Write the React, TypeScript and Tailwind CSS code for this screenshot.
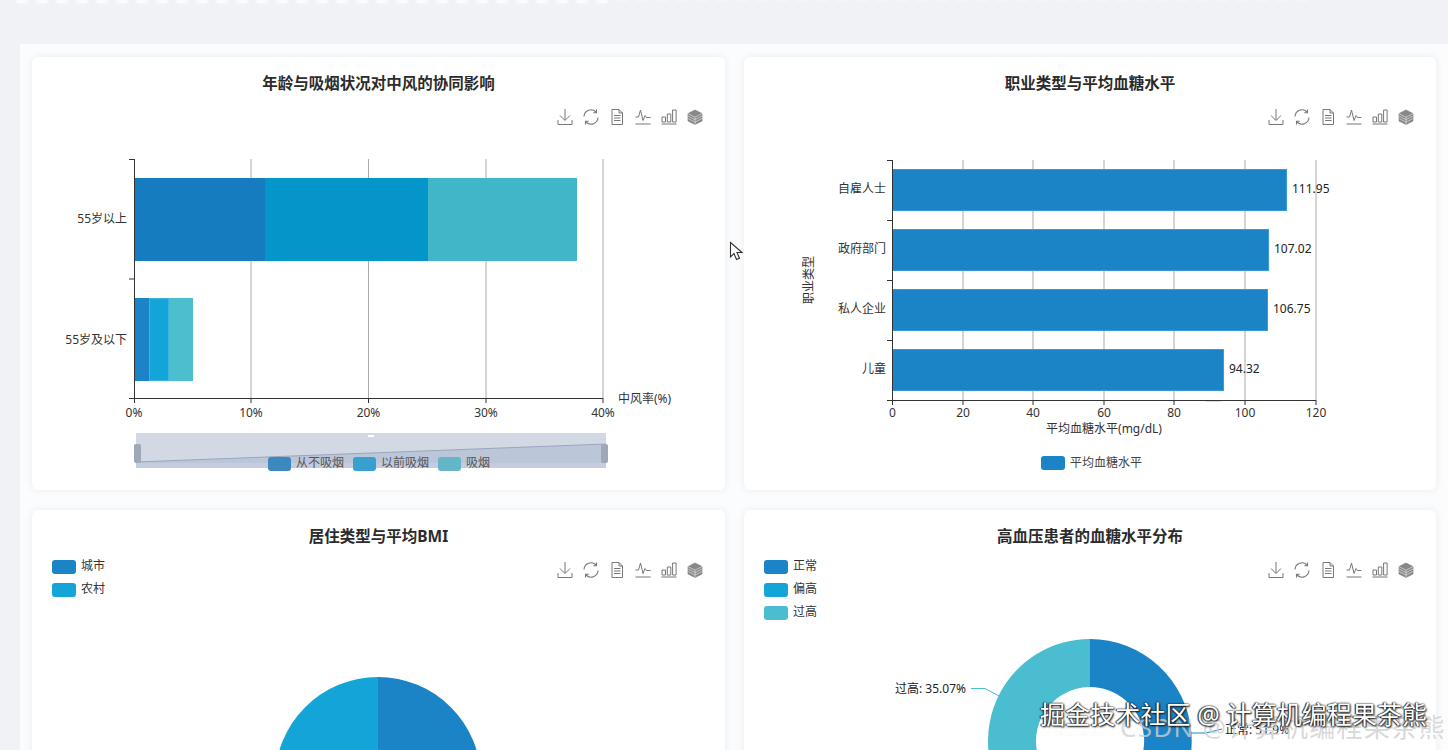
import React from "react";

const Toolbar = () => (
  <div className="flex gap-[10px] mt-[2px] mr-[22px] text-[#777]">
    <svg width="16" height="18" viewBox="0 0 16 18" fill="none" stroke="currentColor" strokeWidth="1">
      <path d="M8 1v11M3 7.5l5 5 5-5M1 12v4.5h14V12" />
    </svg>
    <svg width="16" height="18" viewBox="0 0 16 18" fill="none" stroke="currentColor" strokeWidth="1.1">
      <path d="M1 8.5A7 7 0 0 1 13 4M15 9.5A7 7 0 0 1 3 14" />
      <path d="M13.5 1.5V4.7H10.3M2.5 16.5V13.3H5.7" />
    </svg>
    <svg width="16" height="18" viewBox="0 0 16 18" fill="none" stroke="currentColor" strokeWidth="1">
      <path d="M3 1.5h7l3.5 3.5v11.5H3zM10 1.5V5h3.5M5 7.5h6.5M5 10h6.5M5 12.5h6.5" />
    </svg>
    <svg width="16" height="18" viewBox="0 0 16 18" fill="none" stroke="currentColor" strokeWidth="1">
      <path d="M0.5 9h3l2-7 2.5 10.5 2-5 1.5 2h4M0.5 16h15" />
    </svg>
    <svg width="16" height="18" viewBox="0 0 16 18" fill="none" stroke="currentColor" strokeWidth="1">
      <path d="M1 9h3.5v5H1zM6.3 6h3.5v8H6.3zM11.6 2h3.5v12h-3.5zM0.5 16h15" />
    </svg>
    <svg width="16" height="18" viewBox="0 0 16 18" fill="#888" stroke="#777" strokeWidth="0.6">
      <path d="M8 2l7 3.6v7.4L8 16.5 1 13V5.6z" />
      <path d="M1 5.6L8 9.2l7-3.6M8 9.2v7.3M1 8l7 3.6L15 8M1 10.5l7 3.6 7-3.6" stroke="#eee" fill="none" />
    </svg>
  </div>
);

const Legend = ({ items }: { items: [string, string][] }) => (
  <div className="flex flex-col gap-[9px] mt-[1px] ml-[20px]">
    {items.map(([c, t]) => (
      <div key={t} className="flex items-center gap-[5px] h-[14px]">
        <span className="w-[24px] h-[14px] rounded-[3px]" style={{ backgroundColor: c }} />
        <span className="text-[12px] leading-[14px] text-[#333] -translate-y-[1px]">{t}</span>
      </div>
    ))}
  </div>
);

const Card = ({
  title,
  legend,
  children,
}: {
  title: string;
  legend?: [string, string][];
  children: React.ReactNode;
}) => (
  <div className="h-[433px] bg-white rounded-[6px] shadow-[0_0_8px_rgba(0,0,0,0.07)]">
    <h2 className="h-[49px] pt-[15px] text-center text-[15.5px] leading-[22px] font-bold text-[#2b2b2b]">{title}</h2>
    <div className="h-[34px] flex justify-between items-start">
      {legend ? <Legend items={legend} /> : <div />}
      <Toolbar />
    </div>
    {children}
  </div>
);

const T = ({
  x,
  y,
  a = "middle",
  c = "fill-[#333]",
  children,
}: {
  x: number;
  y: number;
  a?: "start" | "middle" | "end";
  c?: string;
  children: React.ReactNode;
}) => (
  <text x={x} y={y} textAnchor={a} dominantBaseline="central" className={`text-[12px] ${c}`}>
    {children}
  </text>
);

const Chart1 = () => (
  <svg width="693" height="350" viewBox="32 140 693 350" className="block">
    {[251, 368.5, 486, 603].map((x) => (
      <line key={x} x1={x} x2={x} y1="159" y2="398" stroke="#aaa" />
    ))}
    <rect x="134" y="178" width="131" height="83" fill="#157cbf" />
    <rect x="265" y="178" width="163" height="83" fill="#0496c9" />
    <rect x="428" y="178" width="149" height="83" fill="#41b6c8" />
    <rect x="134" y="298" width="15" height="83" fill="#1a84c6" />
    <rect x="149.5" y="298.5" width="19" height="82" fill="#13a5d8" stroke="#3db4e0" />
    <rect x="169" y="298" width="24" height="83" fill="#4cbfcf" />
    <path d="M134.5 159v239M129 159.5h5M129 279h5M129 398.5h474" stroke="#333" fill="none" />
    {[134.5, 251, 368.5, 486, 603].map((x) => (
      <line key={x} x1={x} x2={x} y1="398" y2="403" stroke="#333" />
    ))}
    <T x={127} y={218} a="end">55岁以上</T>
    <T x={127} y={339} a="end">55岁及以下</T>
    {["0%", "10%", "20%", "30%", "40%"].map((t, i) => (
      <T key={t} x={[134, 251, 368.5, 486, 603][i]} y={412}>{t}</T>
    ))}
    <T x={618} y={398} a="start">中风率(%)</T>

    <rect x="136" y="433" width="470" height="35" fill="#d2d9e5" />
    <path d="M136 462L606 444V463H136Z" fill="#bcc6d9" />
    <path d="M136 462L606 444" stroke="#9aa6bd" fill="none" />
    <rect x="136" y="463" width="470" height="5" fill="#c5cbe0" />
    <rect x="368" y="435" width="6" height="2" fill="#fff" />
    <rect x="134" y="444" width="7" height="19" rx="2" fill="#a0a8b8" />
    <rect x="601" y="444" width="7" height="19" rx="2" fill="#a0a8b8" />
    <rect x="268" y="457" width="23" height="14" rx="3" fill="#3b89bd" />
    <T x={296} y={462} a="start" c="fill-[#555]">从不吸烟</T>
    <rect x="353" y="457" width="23" height="14" rx="3" fill="#38a0cf" />
    <T x={381} y={462} a="start" c="fill-[#555]">以前吸烟</T>
    <rect x="438" y="457" width="23" height="14" rx="3" fill="#64b6c6" />
    <T x={466} y={462} a="start" c="fill-[#555]">吸烟</T>
  </svg>
);

const Chart2 = () => {
  const rows: [string, number, string, number][] = [
    ["自雇人士", 1287, "111.95", 189],
    ["政府部门", 1269, "107.02", 249],
    ["私人企业", 1268, "106.75", 309],
    ["儿童", 1224, "94.32", 369],
  ];
  const xs = [892.5, 963, 1033, 1104, 1174, 1245, 1316];
  return (
    <svg width="692" height="350" viewBox="744 140 692 350" className="block">
      {xs.slice(1).map((x) => (
        <line key={x} x1={x} x2={x} y1="160" y2="400" stroke="#aaa" />
      ))}
      {rows.map(([n, e, v, y]) => (
        <g key={n}>
          <rect x="892.5" y={y - 19.5} width={e - 893} height="41" fill="#1a84c6" stroke="#3a9ad6" />
          <T x={886} y={y - 1} a="end">{n}</T>
          <T x={e + 5} y={y - 1} a="start" c="fill-[#222]">{v}</T>
        </g>
      ))}
      <path d="M892.5 160v240M887 160.5h5M887 220.5h5M887 280.5h5M887 340.5h5M887 400.5h429" stroke="#333" fill="none" />
      <line x1="1206" x2="1221" y1="401.5" y2="401.5" stroke="#ddd" />
      {xs.map((x, i) => (
        <g key={x}>
          <line x1={x} x2={x} y1="400" y2="405" stroke="#333" />
          <T x={x} y={412}>{i * 20}</T>
        </g>
      ))}
      <T x={1104} y={428}>平均血糖水平(mg/dL)</T>
      <g transform="rotate(-90 808 280)">
        <T x={808} y={280}>职业类型</T>
      </g>
      <rect x="1041" y="456" width="24" height="14" rx="3" fill="#1a84c6" />
      <T x={1070} y={462} a="start" c="fill-[#444]">平均血糖水平</T>
    </svg>
  );
};

const Chart3 = () => (
  <svg width="693" height="350" viewBox="32 593 693 350" className="block">
    <path d="M378 780V677A103 103 0 0 1 378 883Z" fill="#1a84c6" />
    <path d="M378 780V883A103 103 0 0 1 378 677Z" fill="#13a5d8" />
  </svg>
);

const Chart4 = () => (
  <svg width="692" height="350" viewBox="744 593 692 350" className="block">
    <path d="M1090 639A102 102 0 0 1 1107.7 841.4L1099.4 794.2A54 54 0 0 0 1090 687Z" fill="#1a84c6" />
    <path d="M1107.7 841.4A102 102 0 0 1 1007.5 801L1046.3 772.7A54 54 0 0 0 1099.4 794.2Z" fill="#13a5d8" />
    <path d="M1007.5 801A102 102 0 0 1 1090 639L1090 687A54 54 0 0 0 1046.3 772.7Z" fill="#4abdd0" />
    <path d="M971 688.5H985L1001 697" stroke="#4abdd0" fill="none" />
    <path d="M1190 733L1206 733L1222 729" stroke="#1a84c6" fill="none" />
    <T x={966} y={688} a="end" c="fill-[#222]">过高: 35.07%</T>
    <T x={1225} y={729} a="start" c="fill-[#222]">正常: 51.9%</T>
  </svg>
);

export default function App() {
  return (
    <div className="relative h-[750px] w-[1448px] overflow-hidden bg-[#f0f2f5] font-['Noto_Sans','Noto_Sans_CJK_SC',sans-serif]">
      <div className="h-[44px] flex items-start pl-[16px] gap-[8px]">
        {Array.from({ length: 30 }, (_, i) => (
          <span key={i} className="w-[12px] h-[3px] bg-white/90 blur-[1px]" />
        ))}
        {Array.from({ length: 35 }, (_, i) => (
          <span key={i} className="w-[12px] h-[2px] bg-white/40 blur-[1px]" />
        ))}
      </div>
      <div className="ml-[20px] h-[706px] bg-[#fbfcfd] pl-[12px] pt-[13px] pr-[12px]">
        <div className="grid grid-cols-[693px_692px] gap-x-[19px] gap-y-[20px]">
          <Card title="年龄与吸烟状况对中风的协同影响"><Chart1 /></Card>
          <Card title="职业类型与平均血糖水平"><Chart2 /></Card>
          <Card title="居住类型与平均BMI" legend={[["#1a84c6", "城市"], ["#13a5d8", "农村"]]}><Chart3 /></Card>
          <Card title="高血压患者的血糖水平分布" legend={[["#1a84c6", "正常"], ["#13a5d8", "偏高"], ["#4abdd0", "过高"]]}><Chart4 /></Card>
        </div>
      </div>

      <svg width="16" height="22" viewBox="0 0 16 22" className="absolute left-[729px] top-[241px]">
        <path d="M1.5 1.5V16l3.5-3.5 2.5 6 3-1.2-2.5-5.8h5z" fill="#fff" stroke="#333" strokeWidth="1.1" />
      </svg>
      <div className="absolute left-[1120px] top-[709px] whitespace-nowrap text-[26px] leading-[36px] tracking-[1.3px] text-[#cfcfcf]/80">
        CSDN @计算机编程果茶熊
      </div>
      <div className="absolute left-[1040px] top-[696px] whitespace-nowrap text-[25px] leading-[36px] tracking-[0.1px] text-white [text-shadow:0_0_2px_#111,1px_1px_2px_#111,-1px_0_1px_#333]">
        掘金技术社区 @ 计算机编程果茶熊
      </div>
    </div>
  );
}
